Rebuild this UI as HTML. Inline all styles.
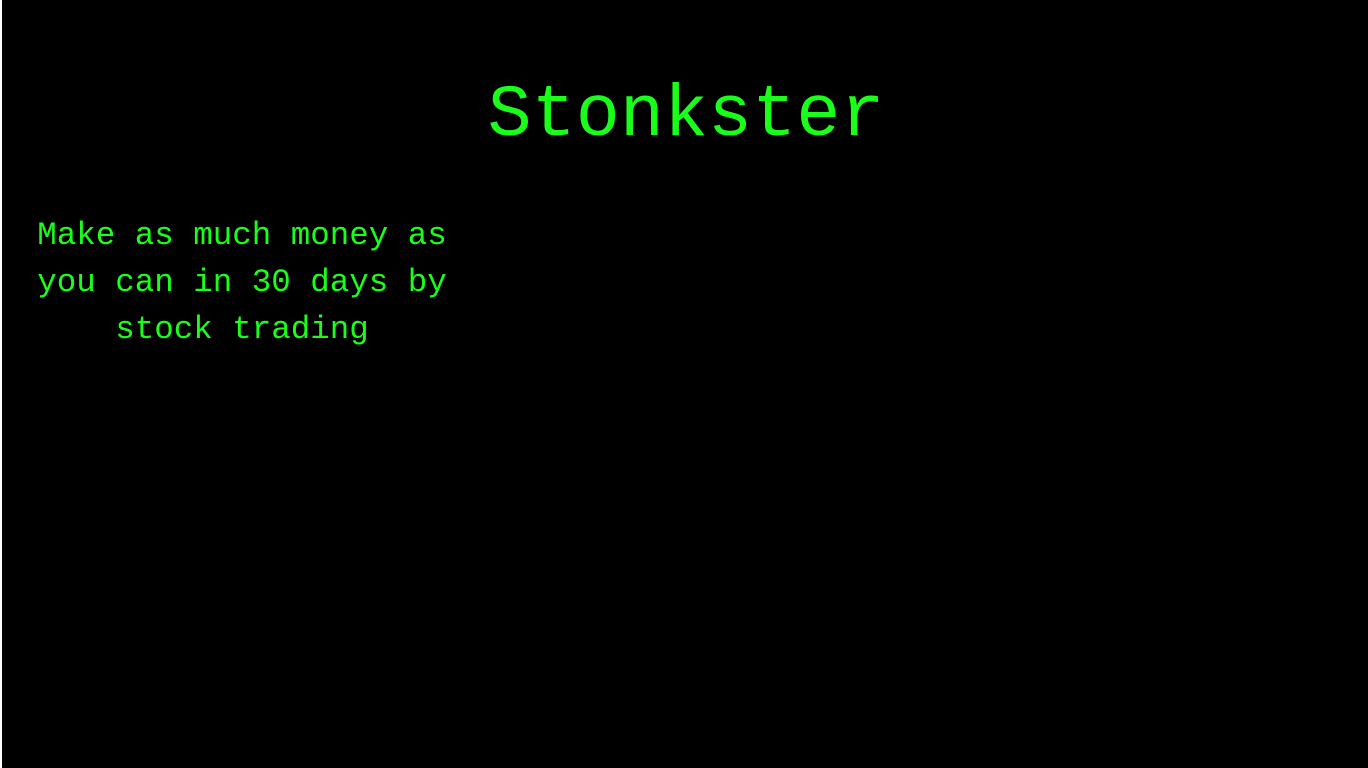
<!DOCTYPE html>
<html><head><style>
html,body{margin:0;padding:0;width:1368px;height:768px;overflow:hidden;background:#fff}
.page{position:absolute;left:2px;top:0;width:1366px;height:768px;background:#000}
.t{position:absolute;left:0;width:1366px;text-align:center;top:72px;font:73.5px/90px "Liberation Mono",monospace;color:#1aff1a;margin-left:1px}
.d{position:absolute;left:30px;top:212px;width:420px;text-align:center;font:32.5px/47px "Liberation Mono",monospace;color:#1aff1a}
</style></head><body><div class="page">
<div class="t">Stonkster</div>
<div class="d">Make as much money as<br>you can in 30 days by<br>stock trading</div>
</div></body></html>
